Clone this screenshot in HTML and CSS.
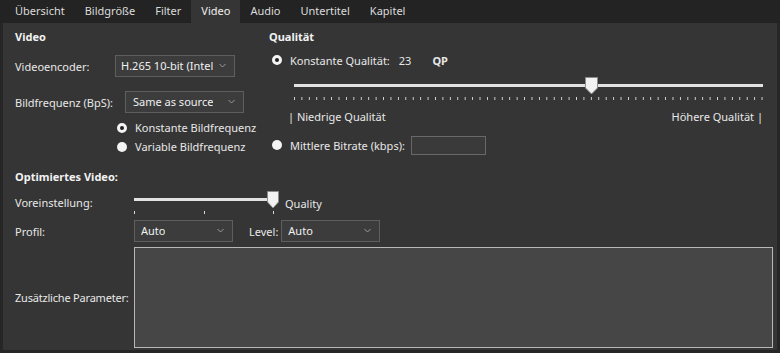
FILE: index.html
```html
<!DOCTYPE html>
<html lang="de">
  <head>
    <meta charset="UTF-8" />
    <title>Video</title>
    <link rel="stylesheet" href="styles.css">
  </head>
  <body>
    <div class="tabs">
      <span class="tab">Übersicht</span>
      <span class="tab">Bildgröße</span>
      <span class="tab">Filter</span>
      <span class="tab active">Video</span>
      <span class="tab">Audio</span>
      <span class="tab">Untertitel</span>
      <span class="tab">Kapitel</span>
    </div>

    <div class="panel">
      <div class="top">
        <div class="col-left">
          <div class="heading">Video</div>
          <div class="row row-encoder">
            <span class="label w-encoder">Videoencoder:</span>
            <div class="select sel-encoder"><span class="sel-text">H.265 10-bit (Intel</span><svg class="chev" width="7" height="5" viewBox="0 0 7 5"><polyline points="0.5,1 3.5,4 6.5,1" /></svg></div>
          </div>
          <div class="row row-rate">
            <span class="label w-rate">Bildfrequenz (BpS):</span>
            <div class="select sel-rate"><span class="sel-text">Same as source</span><svg class="chev" width="7" height="5" viewBox="0 0 7 5"><polyline points="0.5,1 3.5,4 6.5,1" /></svg></div>
          </div>
          <div class="radio-row indent first-radio">
            <span class="radio checked"></span>Konstante Bildfrequenz
          </div>
          <div class="radio-row indent">
            <span class="radio"></span>Variable Bildfrequenz
          </div>
        </div>

        <div class="col-right">
          <div class="heading">Qualität</div>
          <div class="radio-row q-row">
            <span class="radio checked"></span>Konstante Qualität:
            <span class="qp-value">23</span>
            <span class="qp-unit">QP</span>
          </div>
          <div class="slider big-slider">
            <div class="track"></div>
            <div class="ticks"></div>
            <svg class="thumb" style="left: 291px" width="13" height="18" viewBox="0 0 13 18">
              <path d="M0.5 0.5 H12.5 V11 L6.5 17 L0.5 11 Z" />
            </svg>
          </div>
          <div class="scale-labels">
            <span>| Niedrige Qualität</span>
            <span>Höhere Qualität |</span>
          </div>
          <div class="radio-row bitrate-row">
            <span class="radio"></span>Mittlere Bitrate (kbps):
            <div class="text-input"></div>
          </div>
        </div>
      </div>

      <div class="bottom">
        <div class="heading">Optimiertes Video:</div>
        <div class="row row-preset">
          <span class="label w-wide">Voreinstellung:</span>
          <div class="slider small-slider">
            <div class="track"></div>
            <div class="ticks-few"><i></i><i></i><i></i></div>
            <svg class="thumb" style="left: 133px" width="12" height="18" viewBox="0 0 12 18">
              <path d="M0.5 0.5 H11.5 V11 L6 17 L0.5 11 Z" />
            </svg>
          </div>
          <span class="preset-name">Quality</span>
        </div>
        <div class="row row-profile">
          <span class="label w-wide">Profil:</span>
          <div class="select sel-small"><span class="sel-text">Auto</span><svg class="chev" width="7" height="5" viewBox="0 0 7 5"><polyline points="0.5,1 3.5,4 6.5,1" /></svg></div>
          <span class="label level-label">Level:</span>
          <div class="select sel-small"><span class="sel-text">Auto</span><svg class="chev" width="7" height="5" viewBox="0 0 7 5"><polyline points="0.5,1 3.5,4 6.5,1" /></svg></div>
        </div>
        <div class="row row-extra">
          <span class="label w-wide extra-label">Zusätzliche Parameter:</span>
          <div class="textarea"></div>
        </div>
      </div>
    </div>
  </body>
</html>
```

FILE: styles.css
```css
* {
  box-sizing: border-box;
  font-family: "Noto Sans", "Open Sans", sans-serif;
}

body {
  margin: 0;
  width: 780px;
  height: 353px;
  background-color: #262626;
  color: #e8e8e8;
  font-size: 11px;
  overflow: hidden;
  white-space: nowrap;
}

.tabs {
  display: flex;
  height: 23px;
  background-color: #232323;
  padding-left: 5px;
}

.tab {
  display: flex;
  align-items: center;
  padding: 0 10px 2px 10px;
  color: #dcdcdc;
}

.tab.active {
  background-color: #353535;
  color: #f0f0f0;
}

.panel {
  margin-left: 3px;
  width: 774px;
  height: 327px;
  background-color: #353535;
  padding: 6px 0 0 12px;
}

.heading {
  height: 16px;
  line-height: 16px;
  font-weight: bold;
  color: #f2f2f2;
}

.top {
  display: flex;
}

.col-left {
  width: 254px;
  display: flex;
  flex-direction: column;
}

.col-right {
  width: 496px;
  display: flex;
  flex-direction: column;
}

.row {
  display: flex;
  align-items: center;
}

.label {
  flex-shrink: 0;
}

.w-encoder {
  width: 100px;
}

.w-rate {
  width: 110px;
}

.w-wide {
  width: 119px;
}

.extra-label {
  letter-spacing: -0.2px;
}

.row-encoder {
  margin-top: 10px;
  height: 22px;
}

.row-rate {
  margin-top: 14px;
  height: 22px;
}

.select {
  display: flex;
  align-items: center;
  justify-content: space-between;
  height: 22px;
  padding: 0 8px 1px 6px;
  background-color: #3c3c3c;
  border: 1px solid #5e5e5e;
  color: #f0f0f0;
}

.sel-text {
  overflow: hidden;
}

.sel-encoder {
  width: 120px;
  padding-left: 5px;
}

.sel-rate {
  width: 119px;
  padding-left: 7px;
}

.sel-small {
  width: 99px;
}

.chev {
  flex-shrink: 0;
  margin-left: 4px;
  fill: none;
  stroke: #9a9a9a;
  stroke-width: 1;
}

.radio-row {
  display: flex;
  align-items: center;
  height: 19px;
}

.indent {
  padding-left: 102px;
}

.first-radio {
  margin-top: 5px;
}

.radio {
  width: 10px;
  height: 10px;
  border-radius: 50%;
  background-color: #f4f4f4;
  margin-right: 8px;
  flex-shrink: 0;
}

.radio.checked {
  border: 3px solid #f4f4f4;
  background-color: #1e1e1e;
}

.col-right .radio-row {
  padding-left: 3px;
}

.q-row {
  margin-top: 6px;
  height: 18px;
}

.qp-value {
  margin-left: 9px;
}

.qp-unit {
  margin-left: 21px;
  font-weight: bold;
}

.slider {
  position: relative;
}

.big-slider {
  margin: 8px 0 0 25px;
  width: 470px;
  height: 24px;
}

.track {
  height: 3px;
  background-color: #e2e2e2;
}

.big-slider .track {
  margin-top: 7px;
  width: 469px;
}

.ticks {
  margin-top: 10px;
  width: 469px;
  height: 3px;
  background-image: linear-gradient(to right, #d8d8d8 1px, transparent 1px);
  background-size: 7.4286px 3px;
}

.thumb {
  position: absolute;
  top: 0;
  fill: #f2f2f2;
  stroke: #8c8c8c;
  stroke-width: 1;
}

.scale-labels {
  display: flex;
  justify-content: space-between;
  width: 494px;
  height: 16px;
  line-height: 16px;
  margin-top: 8px;
  padding-left: 19px;
}

.bitrate-row {
  margin-top: 10px;
  height: 20px;
}

.text-input {
  width: 75px;
  height: 19px;
  margin-left: 6px;
  background-color: #3a3a3a;
  border: 1px solid #686868;
}

.bottom {
  margin-top: 13px;
  display: flex;
  flex-direction: column;
}

.row-preset {
  margin-top: 6px;
  height: 23px;
}

.small-slider {
  width: 150px;
  height: 23px;
}

.small-slider .track {
  margin-top: 7px;
  width: 140px;
}

.ticks-few {
  display: flex;
  justify-content: space-between;
  width: 140px;
  margin-top: 10px;
}

.ticks-few i {
  width: 1px;
  height: 3px;
  background-color: #d8d8d8;
}

.preset-name {
  margin-left: 1px;
  margin-top: 2px;
}

.row-profile {
  margin-top: 6px;
  height: 22px;
}

.level-label {
  margin: 1px 3px 0 16px;
}

.row-extra {
  margin-top: 5px;
  height: 101px;
}

.textarea {
  width: 639px;
  height: 101px;
  background-color: #464646;
  border: 1px solid #b8b8b8;
}
```
